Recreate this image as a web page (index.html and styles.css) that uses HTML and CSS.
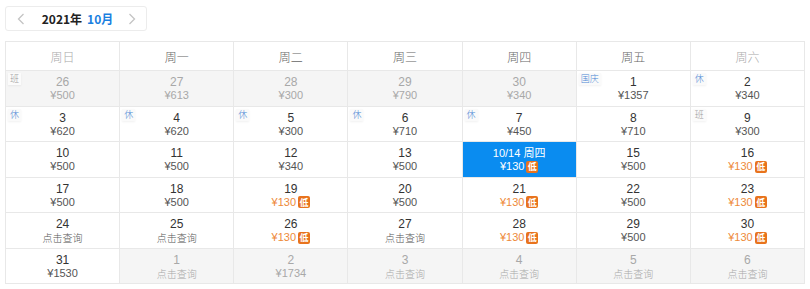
FILE: index.html
```html
<!DOCTYPE html>
<html lang="zh">
<head>
<meta charset="utf-8">
<link rel="stylesheet" href="styles.css">
</head>
<body>
<div class="page">
  <div class="picker">
    <span class="arrow">
      <svg width="8" height="12" viewBox="0 0 8 12"><path d="M6.5 1 L1.5 6 L6.5 11" fill="none" stroke="#c4c4c4" stroke-width="1.3"/></svg>
    </span>
    <span class="title"><span class="year">2021年</span><span class="month">10月</span></span>
    <span class="arrow">
      <svg width="8" height="12" viewBox="0 0 8 12"><path d="M1.5 1 L6.5 6 L1.5 11" fill="none" stroke="#c4c4c4" stroke-width="1.3"/></svg>
    </span>
  </div>
  <div class="cal">
    <div class="hd weekend">周日</div>
    <div class="hd">周一</div>
    <div class="hd">周二</div>
    <div class="hd">周三</div>
    <div class="hd">周四</div>
    <div class="hd">周五</div>
    <div class="hd weekend">周六</div>

    <div class="cell other"><span class="tag gray">班</span><span class="num">26</span><span class="price">¥500</span></div>
    <div class="cell other"><span class="num">27</span><span class="price">¥613</span></div>
    <div class="cell other"><span class="num">28</span><span class="price">¥300</span></div>
    <div class="cell other"><span class="num">29</span><span class="price">¥790</span></div>
    <div class="cell other"><span class="num">30</span><span class="price">¥340</span></div>
    <div class="cell"><span class="tag">国庆</span><span class="num">1</span><span class="price">¥1357</span></div>
    <div class="cell"><span class="tag">休</span><span class="num">2</span><span class="price">¥340</span></div>

    <div class="cell"><span class="tag">休</span><span class="num">3</span><span class="price">¥620</span></div>
    <div class="cell"><span class="tag">休</span><span class="num">4</span><span class="price">¥620</span></div>
    <div class="cell"><span class="tag">休</span><span class="num">5</span><span class="price">¥300</span></div>
    <div class="cell"><span class="tag">休</span><span class="num">6</span><span class="price">¥710</span></div>
    <div class="cell"><span class="tag">休</span><span class="num">7</span><span class="price">¥450</span></div>
    <div class="cell"><span class="num">8</span><span class="price">¥710</span></div>
    <div class="cell"><span class="tag gray">班</span><span class="num">9</span><span class="price">¥300</span></div>

    <div class="cell"><span class="num">10</span><span class="price">¥500</span></div>
    <div class="cell"><span class="num">11</span><span class="price">¥500</span></div>
    <div class="cell"><span class="num">12</span><span class="price">¥340</span></div>
    <div class="cell"><span class="num">13</span><span class="price">¥500</span></div>
    <div class="cell selected"><span class="num">10/14 周四</span><span class="price">¥130<span class="low">低</span></span></div>
    <div class="cell"><span class="num">15</span><span class="price">¥500</span></div>
    <div class="cell"><span class="num">16</span><span class="price cheap">¥130<span class="low">低</span></span></div>

    <div class="cell"><span class="num">17</span><span class="price">¥500</span></div>
    <div class="cell"><span class="num">18</span><span class="price">¥500</span></div>
    <div class="cell"><span class="num">19</span><span class="price cheap">¥130<span class="low">低</span></span></div>
    <div class="cell"><span class="num">20</span><span class="price">¥500</span></div>
    <div class="cell"><span class="num">21</span><span class="price cheap">¥130<span class="low">低</span></span></div>
    <div class="cell"><span class="num">22</span><span class="price">¥500</span></div>
    <div class="cell"><span class="num">23</span><span class="price cheap">¥130<span class="low">低</span></span></div>

    <div class="cell"><span class="num">24</span><span class="price query">点击查询</span></div>
    <div class="cell"><span class="num">25</span><span class="price query">点击查询</span></div>
    <div class="cell"><span class="num">26</span><span class="price cheap">¥130<span class="low">低</span></span></div>
    <div class="cell"><span class="num">27</span><span class="price query">点击查询</span></div>
    <div class="cell"><span class="num">28</span><span class="price cheap">¥130<span class="low">低</span></span></div>
    <div class="cell"><span class="num">29</span><span class="price">¥500</span></div>
    <div class="cell"><span class="num">30</span><span class="price cheap">¥130<span class="low">低</span></span></div>

    <div class="cell"><span class="num">31</span><span class="price">¥1530</span></div>
    <div class="cell other"><span class="num">1</span><span class="price query">点击查询</span></div>
    <div class="cell other"><span class="num">2</span><span class="price">¥1734</span></div>
    <div class="cell other"><span class="num">3</span><span class="price query">点击查询</span></div>
    <div class="cell other"><span class="num">4</span><span class="price query">点击查询</span></div>
    <div class="cell other"><span class="num">5</span><span class="price query">点击查询</span></div>
    <div class="cell other"><span class="num">6</span><span class="price query">点击查询</span></div>
  </div>
</div>
</body>
</html>
```
FILE: styles.css
```css
* { box-sizing: border-box; }
html, body { margin: 0; padding: 0; background: #fff; }
body {
  font-family: "Liberation Sans", "Noto Sans CJK SC", sans-serif;
  color: #333;
}
.page {
  padding: 6px 5px 0 5px;
}
.picker {
  width: 142px;
  height: 25px;
  border: 1px solid #ececec;
  border-radius: 3px;
  display: flex;
  align-items: center;
  justify-content: space-between;
  padding: 0 10px 0 11px;
}
.arrow { display: flex; align-items: center; }
.title {
  font-family: "Noto Sans CJK SC", sans-serif;
  font-weight: 700;
  font-size: 12px;
  display: flex;
  gap: 5px;
  margin-left: 2px;
}
.year { color: #222; }
.month { color: #1a7fe0; }
.cal {
  margin-top: 10px;
  width: 800px;
  display: grid;
  grid-template-columns: repeat(7, 1fr);
  grid-template-rows: 29px repeat(6, 35.5px);
  border-top: 1px solid #e8e8e8;
  border-left: 1px solid #e8e8e8;
}
.hd, .cell {
  border-right: 1px solid #e8e8e8;
  border-bottom: 1px solid #e8e8e8;
}
.hd {
  display: flex;
  align-items: center;
  justify-content: center;
  font-family: "Noto Sans CJK SC", sans-serif;
  font-size: 12px;
  font-weight: 300;
  color: #666;
}
.hd.weekend { color: #aaa; }
.cell {
  position: relative;
  display: flex;
  flex-direction: column;
  align-items: center;
  justify-content: center;
  padding-top: 1px;
  background: #fff;
}
.cell.other { background: #f5f5f5; }
.num {
  font-size: 12px;
  line-height: 14px;
  color: #333;
}
.price {
  font-size: 11px;
  line-height: 13px;
  color: #555;
  display: flex;
  align-items: center;
}
.price.query {
  font-family: "Noto Sans CJK SC", sans-serif;
  font-size: 10px;
  font-weight: 300;
  color: #555;
}
.cell.other .num, .cell.other .price { color: #a8a8a8; }
.price.cheap { color: #ee8a3a; }
.low {
  display: inline-flex;
  align-items: center;
  justify-content: center;
  width: 12px;
  height: 12px;
  margin-left: 2px;
  background: #e8731d;
  color: #fff;
  border-radius: 2px;
  font-size: 9px;
  font-weight: 700;
  font-family: "Noto Sans CJK SC", sans-serif;
}
.tag {
  position: absolute;
  left: 2px;
  top: 2px;
  padding: 0 2px;
  font-family: "Noto Sans CJK SC", sans-serif;
  font-size: 9px;
  line-height: 12px;
  font-weight: 300;
  color: #4a86d4;
  background: #fafafa;
  box-shadow: 0 1px 2px rgba(0,0,0,0.06);
}
.tag.gray { color: #999; background: #fbfbfb; }
.cell.selected {
  background: #0a8cf0;
}
.cell.selected .num, .cell.selected .price { color: #fff; }
.cell.selected .num { font-size: 11px; }
```
